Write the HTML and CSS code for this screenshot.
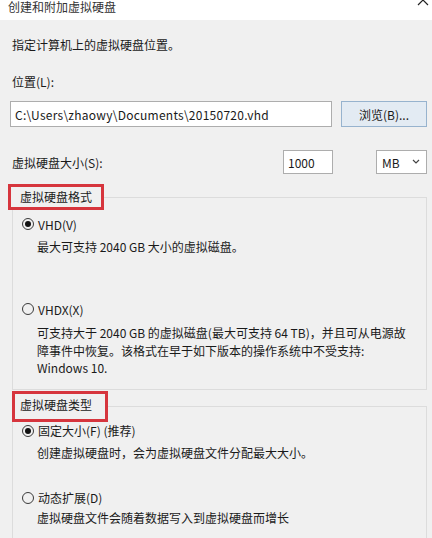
FILE: index.html
```html
<!DOCTYPE html>
<html lang="zh-CN">
    <head>
        <meta charset="UTF-8" />
        <meta name="viewport" content="width=device-width, initial-scale=1.0" />
        <title>创建和附加虚拟硬盘</title>
        <link rel="stylesheet" href="styles.css">
    </head>
    <body>
        <div class="titlebar">
            <span class="title">创建和附加虚拟硬盘</span>
            <svg class="close" width="12" height="12" viewBox="0 0 12 12">
                <path d="M1 1 L11 11 M11 1 L1 11" stroke="#222" stroke-width="1.2" fill="none" />
            </svg>
        </div>
        <div class="content">
            <p class="intro">指定计算机上的虚拟硬盘位置。</p>
            <p class="field-label">位置(L):</p>
            <div class="path-row">
                <div class="textbox path">C:\Users\zhaowy\Documents\20150720.vhd</div>
                <div class="button">浏览(B)...</div>
            </div>
            <div class="size-row">
                <span class="size-label">虚拟硬盘大小(S):</span>
                <div class="textbox size">1000</div>
                <div class="select">
                    <span>MB</span>
                    <svg width="8" height="6" viewBox="0 0 8 6">
                        <polyline points="1,1 4,4 7,1" stroke="#444" stroke-width="1.2" fill="none" />
                    </svg>
                </div>
            </div>

            <fieldset class="group group-format">
                <legend>虚拟硬盘格式</legend>
                <div class="radio first">
                    <span class="dot checked"></span>VHD(V)
                </div>
                <p class="desc">最大可支持 2040 GB 大小的虚拟磁盘。</p>
                <div class="radio second">
                    <span class="dot"></span>VHDX(X)
                </div>
                <p class="desc multi">
                    <span>可支持大于 2040 GB 的虚拟磁盘(最大可支持 64 TB)，并且可从电源故</span>
                    <span>障事件中恢复。该格式在早于如下版本的操作系统中不受支持:</span>
                    <span>Windows 10.</span>
                </p>
            </fieldset>

            <fieldset class="group group-type">
                <legend>虚拟硬盘类型</legend>
                <div class="radio first">
                    <span class="dot checked"></span>固定大小(F) (推荐)
                </div>
                <p class="desc">创建虚拟硬盘时，会为虚拟硬盘文件分配最大大小。</p>
                <div class="radio second">
                    <span class="dot"></span>动态扩展(D)
                </div>
                <p class="desc">虚拟硬盘文件会随着数据写入到虚拟硬盘而增长</p>
            </fieldset>
        </div>
    </body>
</html>
```

FILE: styles.css
```css
body {
    margin: 0;
    height: 538px;
    overflow: hidden;
    background-color: #f0f0f0;
    font-family: "Noto Sans CJK SC", "Noto Sans", sans-serif;
    font-size: 12px;
    color: #1a1a1a;
}
p {
    margin: 0;
}
.titlebar {
    height: 20px;
    background-color: #fff;
    display: flex;
    justify-content: space-between;
    align-items: flex-start;
    padding: 0 3px 0 8px;
    overflow: hidden;
}
.title {
    line-height: 14px;
    margin-top: 0;
    color: #333;
}
.close {
    margin-top: -6px;
}
.content {
    padding: 0 5px 0 10px;
}
.intro {
    margin-top: 16px;
    padding-left: 2px;
    line-height: 18px;
}
.field-label {
    margin-top: 19px;
    padding-left: 2px;
    line-height: 18px;
}
.path-row {
    margin-top: 10px;
    display: flex;
    gap: 9px;
}
.textbox {
    background-color: #fff;
    border: 1px solid #adadad;
    box-sizing: border-box;
    padding-left: 4px;
    display: flex;
    align-items: center;
    white-space: nowrap;
}
.path {
    width: 322px;
    height: 26px;
    letter-spacing: 0.25px;
}
.button {
    width: 86px;
    height: 26px;
    box-sizing: border-box;
    border: 1px solid #97b3ce;
    background-color: #e3ebf3;
    display: flex;
    align-items: center;
    justify-content: center;
}
.size-row {
    margin-top: 23px;
    display: flex;
    align-items: center;
    height: 24px;
}
.size-label {
    flex: 1;
    padding-left: 2px;
}
.size {
    width: 50px;
    height: 24px;
}
.select {
    margin-left: 43px;
    width: 51px;
    height: 24px;
    box-sizing: border-box;
    border: 1px solid #adadad;
    background-color: #fff;
    display: flex;
    align-items: center;
    justify-content: space-between;
    padding: 0 6px 0 5px;
}
.group {
    margin: 0 0 0 2px;
    padding: 0 0 12px 0;
    border: 1px solid #dcdcdc;
    min-width: 0;
}
.group legend {
    box-sizing: border-box;
    width: 96px;
    border: 3px solid #d6353d;
    padding: 0;
}
.group-format {
    margin-top: 10px;
}
.group-format legend {
    height: 26px;
    line-height: 20px;
    margin-left: -5px;
    padding-left: 9px;
}
.group-type {
    margin-top: 1px;
    padding-bottom: 60px;
}
.group-type legend {
    height: 31px;
    line-height: 21px;
    margin-left: -1px;
    padding-left: 5px;
}
.radio {
    display: flex;
    align-items: center;
    height: 18px;
    padding-left: 9px;
}
.dot {
    width: 12px;
    height: 12px;
    box-sizing: border-box;
    border: 1px solid #3a3a3a;
    border-radius: 50%;
    margin-right: 4px;
    display: flex;
    align-items: center;
    justify-content: center;
}
.dot.checked::after {
    content: "";
    width: 6px;
    height: 6px;
    border-radius: 50%;
    background-color: #111;
}
.desc {
    padding-left: 24px;
    line-height: 18px;
    white-space: nowrap;
}
.group-format .first {
    margin-top: 5px;
}
.group-format .first + .desc {
    margin-top: 5px;
}
.group-format .second {
    margin-top: 44px;
}
.multi {
    margin-top: 6px;
    line-height: 17.5px;
}
.multi span {
    display: block;
}
.group-type .first + .desc {
    margin-top: 4px;
}
.group-type .second {
    margin-top: 27px;
}
.group-type .second + .desc {
    margin-top: 2px;
}
```
